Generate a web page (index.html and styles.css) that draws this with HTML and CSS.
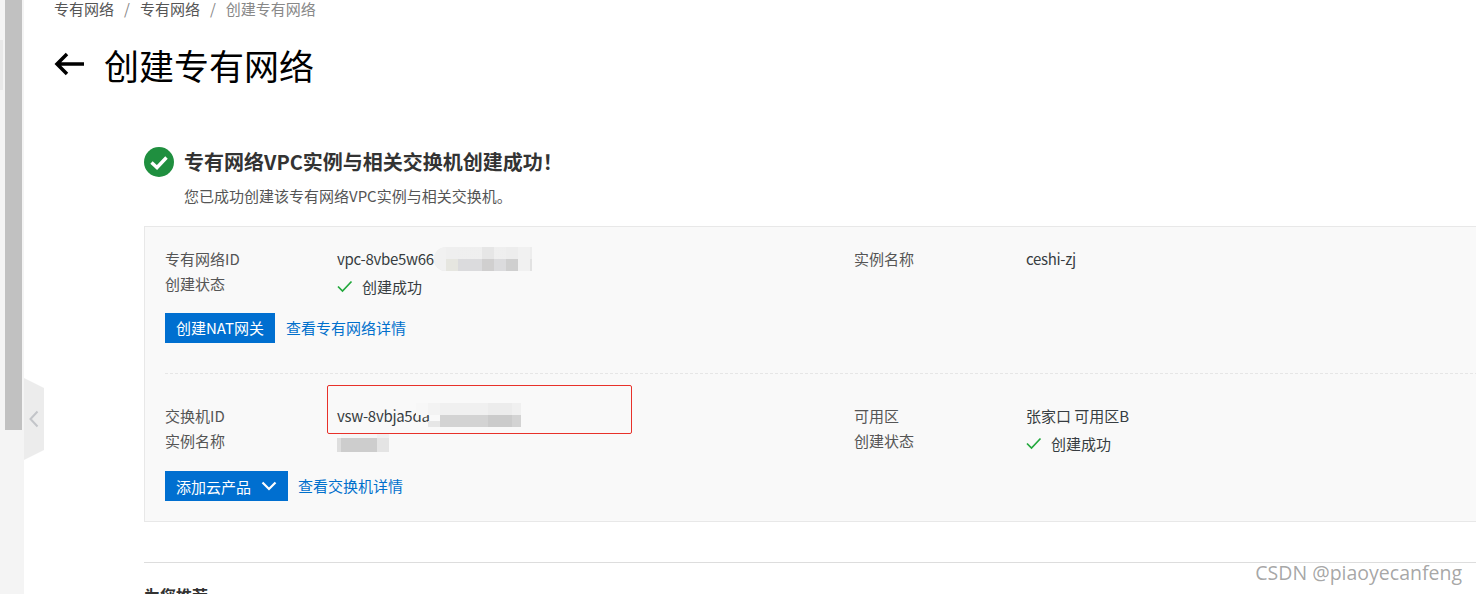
FILE: index.html
```html
<!DOCTYPE html>
<html lang="zh-CN">
<head>
<meta charset="utf-8">
<title>创建专有网络</title>
<link rel="stylesheet" href="styles.css">
</head>
<body>
<div class="app">
  <aside class="sidebar">
    <div class="thumb"></div>
    <div class="rail-mark"></div>
    <div class="collapse">
      <svg width="10" height="18" viewBox="0 0 10 18"><path d="M8.500 1.500 1.500 9l7 7.500" fill="none" stroke="#c3c5c9" stroke-width="2"/></svg>
    </div>
  </aside>
  <main class="main">
    <nav class="crumbs"><span>专有网络</span><i>/</i><span>专有网络</span><i>/</i><span class="current">创建专有网络</span></nav>
    <h1 class="title">
      <svg class="back" width="30" height="24" viewBox="0 0 30 24"><path d="M30 12H3M13 2 3 12l10 10" fill="none" stroke="#000" stroke-width="3.500"/></svg>
      <span>创建专有网络</span>
    </h1>
    <section class="result">
      <div class="result-head">
        <svg width="30" height="30" viewBox="0 0 30 30"><circle cx="15" cy="15" r="15" fill="#1f8f3f"/><path d="M7.500 15.500 13 20.500 22.500 10.500" fill="none" stroke="#fff" stroke-width="3.400"/></svg>
        <h2>专有网络VPC实例与相关交换机创建成功！</h2>
      </div>
      <p class="result-sub">您已成功创建该专有网络VPC实例与相关交换机。</p>
      <div class="card">
        <div class="block block-vpc">
          <div class="info">
            <div class="col">
              <div class="row"><span class="label">专有网络ID</span><span class="value latin">vpc-8vbe5w66<span class="mosaic mosaic-a"><b></b><b></b><b></b><b></b><b></b><b></b><b></b><b></b></span></span></div>
              <div class="row row-status"><span class="label">创建状态</span><span class="value status"><svg width="16" height="13" viewBox="0 0 16 13"><path d="M1 6.500 5.500 11 14.500 1.500" fill="none" stroke="#22a83c" stroke-width="1.700"/></svg>创建成功</span></div>
            </div>
            <div class="col">
              <div class="row"><span class="label">实例名称</span><span class="value latin">ceshi-zj</span></div>
            </div>
          </div>
          <div class="actions"><a class="btn">创建NAT网关</a><a class="link">查看专有网络详情</a></div>
        </div>
        <div class="block block-vsw">
          <div class="info">
            <div class="col">
              <div class="row"><span class="label">交换机ID</span><span class="value latin">vsw-8vbja5da<span class="mosaic mosaic-b"><b></b><b></b><b></b><b></b><b></b><b></b><b></b><b></b><b></b></span></span></div>
              <div class="row row-name"><span class="label">实例名称</span><span class="value"><span class="mosaic mosaic-c"><b></b><b></b><b></b><b></b><b></b></span></span></div>
            </div>
            <div class="col">
              <div class="row"><span class="label">可用区</span><span class="value">张家口 可用区B</span></div>
              <div class="row row-name"><span class="label">创建状态</span><span class="value status"><svg width="16" height="13" viewBox="0 0 16 13"><path d="M1 6.500 5.500 11 14.500 1.500" fill="none" stroke="#22a83c" stroke-width="1.700"/></svg>创建成功</span></div>
            </div>
          </div>
          <div class="actions"><a class="btn btn-menu">添加云产品<svg width="16" height="10" viewBox="0 0 16 10"><path d="M1.500 1.500 8 8l6.500-6.500" fill="none" stroke="#fff" stroke-width="2.200"/></svg></a><a class="link">查看交换机详情</a></div>
          <div class="annotation"></div>
        </div>
      </div>
      <div class="recommend"><h3>为您推荐</h3></div>
    </section>
  </main>
  <div class="watermark">CSDN @piaoyecanfeng</div>
</div>
</body>
</html>
```
FILE: styles.css
```css
* { box-sizing: border-box; }
html, body { margin: 0; height: 100%; overflow: hidden; background: #fff; }
body { font-family: "Noto Sans CJK SC", "Liberation Sans", sans-serif; font-size: 15px; color: #373d41; }
.app { display: flex; height: 594px; overflow: hidden; position: relative; }
.sidebar { width: 24px; flex: none; background: #f4f4f4; position: relative; }
.thumb { margin-left: 5px; width: 17px; height: 430px; background: #c1c1c1; }
.rail-mark { position: absolute; left: 0; top: 40px; width: 3px; height: 50px; background: #e9e9e9; }
.collapse { position: absolute; left: 24px; top: 378px; width: 20px; height: 82px; background: #ececec; clip-path: polygon(0 0, 100% 10px, 100% 72px, 0 100%); display: flex; align-items: center; justify-content: center; }
.main { flex: 1; min-width: 0; padding-left: 30px; }
.crumbs { height: 18px; display: flex; align-items: center; gap: 10px; line-height: 18px; font-size: 15px; color: #555; }
.crumbs i { font-style: normal; color: #888; }
.crumbs .current { color: #888; }
.title { margin: 21px 0 0; height: 50px; display: flex; align-items: center; gap: 20px; font-size: 35px; font-weight: 400; color: #000; }
.back { flex: none; }
.result { margin-left: 90px; padding-top: 58px; }
.result-head { display: flex; align-items: center; gap: 10px; height: 30px; }
.result-head h2 { margin: 0; font-size: 20px; line-height: 30px; font-weight: 700; color: #333; }
.result-sub { margin: 9px 0 0 40px; height: 20px; line-height: 20px; font-size: 15px; color: #555; }
.card { margin-top: 20px; height: 296px; background: #f9f9f9; border: 1px solid #e8e8e8; border-right: 0; padding: 0 0 0 20px; width: calc(100% + 2px); }
.block { position: relative; }
.block-vpc { padding-top: 21px; height: 147px; border-bottom: 1px dashed #e6e6e6; }
.block-vsw { padding-top: 31px; }
.info { display: flex; }
.col { width: 689px; flex: none; }
.row { display: flex; height: 21px; line-height: 21px; }
.row-status { margin-top: 4px; }
.row-name { margin-top: 4px; }
.label { width: 172px; flex: none; color: #555; }
.value { color: #373d41; display: flex; align-items: center; position: relative; }
.latin { letter-spacing: -.3px; }
.status { transform: translateY(3px); gap: 9px; }
.mosaic { display: flex; height: 24px; overflow: hidden; }
.mosaic b { width: 12px; height: 24px; display: block; flex: none; }
.mosaic-a { width: 98px; border-radius: 12px 0 0 12px; background: linear-gradient(#ededed 50%, #e2e2e2 50%); }
.mosaic-a b { background: linear-gradient(rgba(240,240,240,.6) 50%, #dbdbdd 50%); }
.mosaic-a b:first-child, .mosaic-a b:nth-child(8) { background: #f1f1f1; }
.mosaic-a b:nth-child(2) { background: linear-gradient(#efefef 50%, #e6e6e0 50%); }
.mosaic-a b:nth-child(5) { background: linear-gradient(#e6e6e6 50%, #d0cfcf 50%); }
.mosaic-a b:nth-child(7) { background: linear-gradient(#ededed 50%, #cfcfcf 50%); }
.mosaic-b { width: 105px; margin-left: -14px; transform: translateY(-1px); }
.mosaic-b b { background: linear-gradient(#f0f0f0 50%, #d3d3d3 50%); }
.mosaic-b b:first-child { background: linear-gradient(#f7f7f7 50%, transparent 50%); }
.mosaic-b b:nth-child(2) { background: linear-gradient(#f3f3f3 50%, transparent 50%, transparent 75%, #e6e6e6 75%); }
.mosaic-b b:nth-child(7), .mosaic-b b:nth-child(8) { background: linear-gradient(#ececec 50%, #cbcbcb 50%); }
.mosaic-c { height: 18px; transform: translateY(2px); }
.mosaic-c b { height: 18px; background: linear-gradient(#f6f6f6 4px, #cdcdcd 4px); }
.mosaic-c b:first-child { background: linear-gradient(#f9f9f9 4px, #dedede 4px); width: 4px; }
.mosaic-c b:nth-child(5) { background: linear-gradient(#f0f0f0 4px, #e4e4e4 4px); }
.actions { display: flex; align-items: center; height: 30px; margin-top: 19px; }
.block-vsw .actions { margin-top: 20px; }
.btn { height: 30px; padding: 0 11px 2px; background: #006fd0; color: #fff; display: flex; align-items: center; gap: 10px; }
.btn-menu { padding-bottom: 0; }
.link { margin-left: 11px; color: #0070cc; line-height: 30px; }
.btn-menu + .link { margin-left: 10px; }
.annotation { position: absolute; left: 162px; top: 11px; width: 305px; height: 49px; border: 1px solid #e8312a; border-radius: 2px; }
.recommend { margin-top: 40px; border-top: 1px solid #ddd; width: calc(100% + 2px); padding-top: 21px; }
.recommend h3 { margin: 0; font-size: 16px; line-height: 22px; font-weight: 700; color: #333; }
.watermark { position: absolute; right: 14px; bottom: 8px; font-family: "Open Sans", sans-serif; font-size: 19.500px; line-height: 26px; color: rgba(110,110,110,.62); }
```
